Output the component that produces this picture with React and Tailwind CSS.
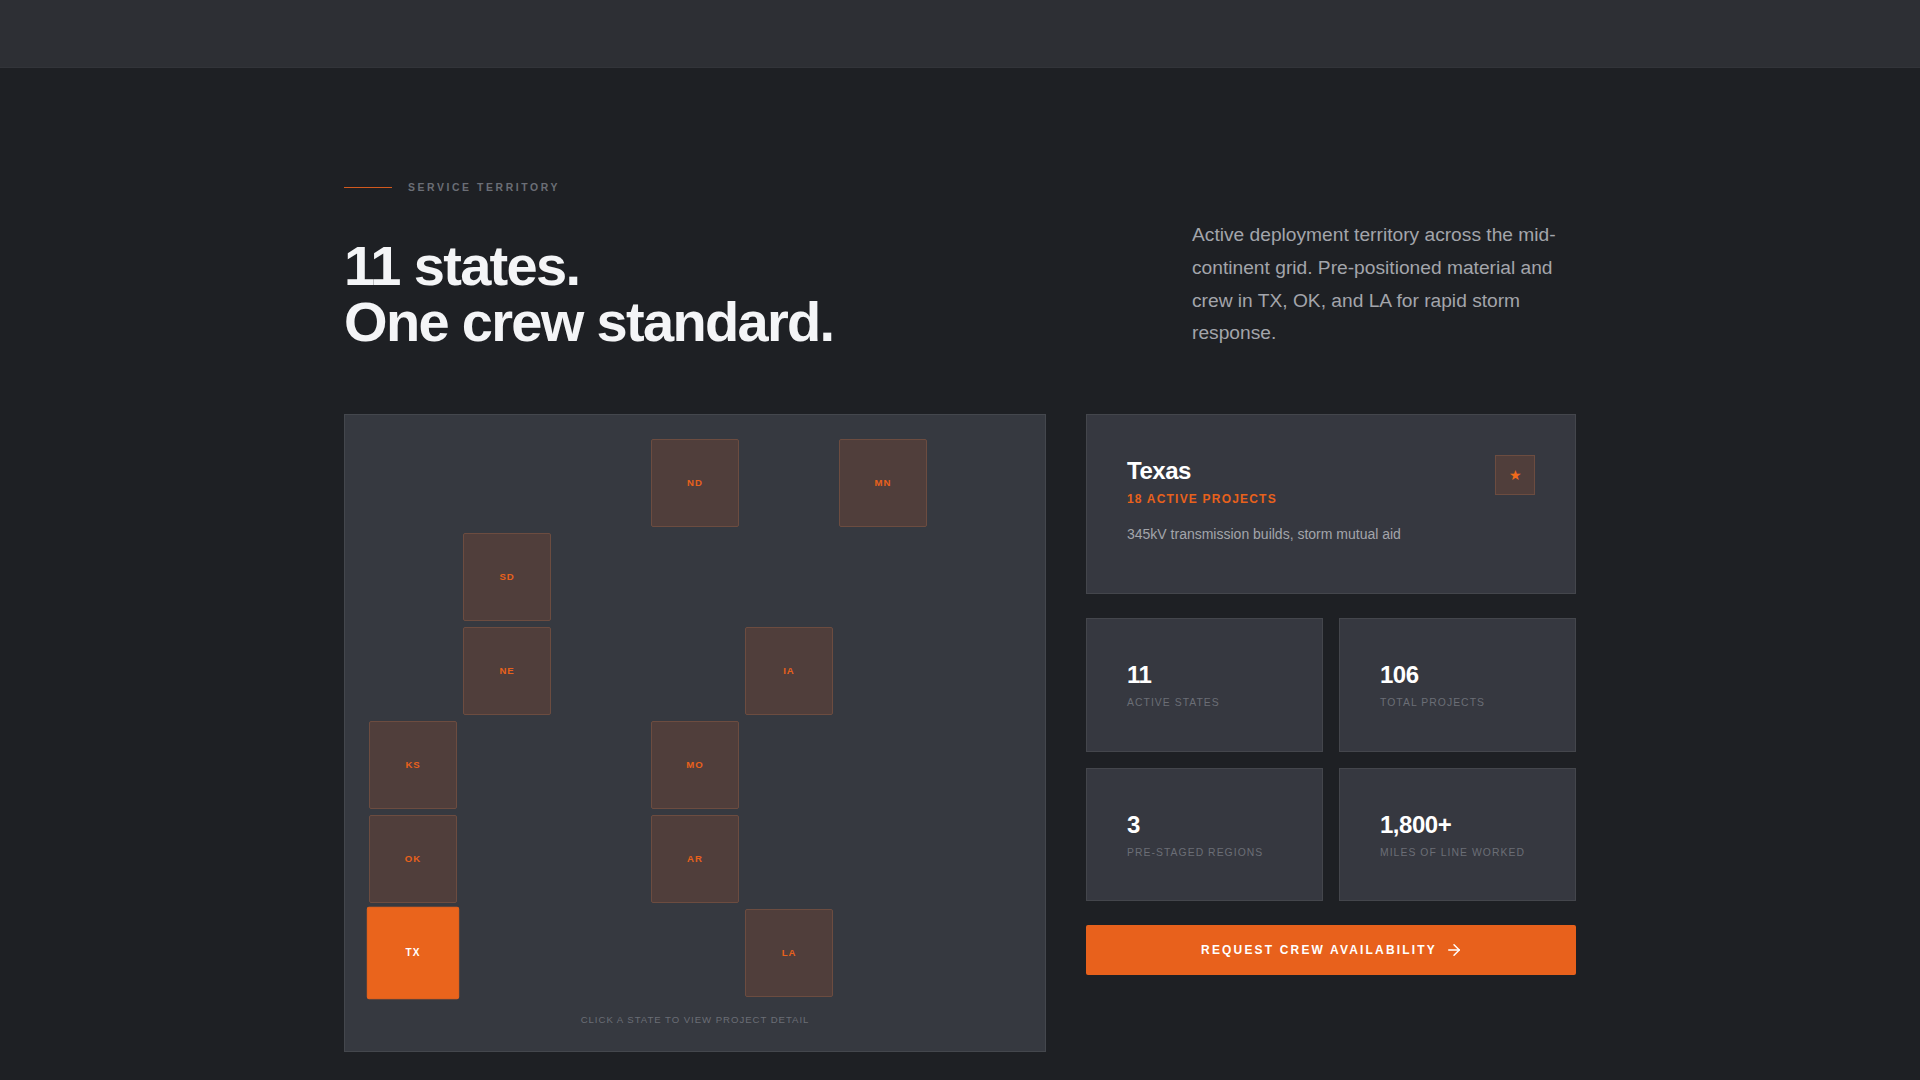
import { ArrowRight } from "lucide-react";

const states = [
  { code: "ND", col: "col-start-4", row: "row-start-1" },
  { code: "MN", col: "col-start-6", row: "row-start-1" },
  { code: "SD", col: "col-start-2", row: "row-start-2" },
  { code: "NE", col: "col-start-2", row: "row-start-3" },
  { code: "IA", col: "col-start-5", row: "row-start-3" },
  { code: "KS", col: "col-start-1", row: "row-start-4" },
  { code: "MO", col: "col-start-4", row: "row-start-4" },
  { code: "OK", col: "col-start-1", row: "row-start-5" },
  { code: "AR", col: "col-start-4", row: "row-start-5" },
  { code: "TX", col: "col-start-1", row: "row-start-6", active: true },
  { code: "LA", col: "col-start-5", row: "row-start-6" },
];

const stats = [
  ["11", "Active States"],
  ["106", "Total Projects"],
  ["3", "Pre-Staged Regions"],
  ["1,800+", "Miles of Line Worked"],
];

export default function App() {
  return (
    <div className="min-h-screen bg-[#1e2024] font-['Liberation_Sans',Arial,sans-serif]">
      <header className="h-[68px] bg-[#2d2f34] border-b border-[#323439]" />
      <main className="mx-auto w-[1232px] pt-[111px] pb-7">
        <div className="flex items-center gap-4">
          <span className="h-px w-12 bg-[#d2591e]" />
          <span className="pt-px text-[10.4px] leading-4 font-bold uppercase tracking-[0.25em] text-[#6b6e76]">
            Service Territory
          </span>
        </div>
        <div className="mt-[23.44px] flex items-end justify-between">
          <h1 className="text-[56px] leading-[56px] font-bold tracking-[-0.03em] text-[#f4f5f7]">
            11 states.
            <br />
            One crew standard.
          </h1>
          <p className="w-[384px] text-[19.2px] leading-[1.7] text-[#a3a5ab]">
            Active deployment territory across the mid-continent grid. Pre-positioned material and crew in TX, OK, and LA for rapid storm response.
          </p>
        </div>
        <div className="mt-16 flex gap-10">
          <section className="w-[702px] h-[638px] bg-[#363940] border border-[#44474d] p-6">
            <div className="grid grid-cols-7 grid-rows-6 gap-[6px]">
              {states.map((s) => (
                <div
                  key={s.code}
                  className={`${s.col} ${s.row} aspect-square flex items-center justify-center rounded-[2px] border text-[9.6px] font-bold tracking-[0.1em] ${
                    s.active
                      ? "scale-105 bg-[#ea641c] border-[#ea641c] text-white"
                      : "bg-[#503e3b] border-[#6c4c40] text-[#e8611c]"
                  }`}
                >
                  {s.code}
                </div>
              ))}
            </div>
            <p className="mt-[15px] text-center text-[9.6px] leading-4 uppercase tracking-[0.1em] text-[#6b6e76]">
              Click a state to view project detail
            </p>
          </section>
          <aside className="w-[490px] flex flex-col">
            <div className="h-[180px] bg-[#363840] border border-[#44464c] p-10 flex items-start justify-between">
              <div>
                <h2 className="text-2xl leading-8 font-bold tracking-[-0.02em] text-white">Texas</h2>
                <p className="text-xs leading-4 mt-1 font-bold uppercase tracking-[0.1em] text-[#e8611c]">
                  18 Active Projects
                </p>
                <p className="mt-[17px] text-sm leading-5 text-[#a3a5ab]">345kV transmission builds, storm mutual aid</p>
              </div>
              <div className="size-10 flex items-center justify-center bg-[#503e3b] border border-[#6c4c40] text-sm text-[#f06a1c]">
                ★
              </div>
            </div>
            <div className="mt-6 grid grid-cols-2 gap-4">
              {stats.map(([value, label]) => (
                <div key={label} className="h-[133.5px] bg-[#363840] border border-[#44464c] px-10 pt-10">
                  <div className="text-2xl leading-8 font-bold tracking-[-0.02em] text-white">{value}</div>
                  <div className="mt-1 text-[10.4px] leading-[15px] uppercase tracking-[0.1em] text-[#6b6e76]">{label}</div>
                </div>
              ))}
            </div>
            <button className="mt-6 h-[50px] rounded-[2px] bg-[#e8611c] pl-0.5 flex items-center justify-center gap-2 text-xs font-bold uppercase tracking-[0.18em] text-white">
              Request Crew Availability
              <ArrowRight size={18} />
            </button>
          </aside>
        </div>
      </main>
    </div>
  );
}
